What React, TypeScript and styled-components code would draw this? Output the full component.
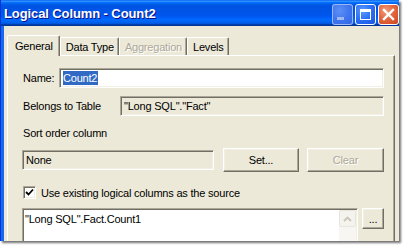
import styled, { createGlobalStyle } from "styled-components";

const GlobalStyle = createGlobalStyle`
  html, body {
    margin: 0;
    padding: 0;
    background: #ffffff;
  }
  body {
    font-family: "Liberation Sans", Arial, sans-serif;
    font-size: 11px;
    letter-spacing: -0.2px;
    color: #000;
  }
`;

const Stage = styled.div`
  width: 405px;
  height: 246px;
  overflow: hidden;
`;

const Window = styled.div`
  width: 399px;
  height: 241px;
  box-sizing: border-box;
  overflow: hidden;
  display: flex;
  flex-direction: column;
  background: #ece9d8;
  border-left: 1px solid #0831d9;
  box-shadow: 2px 2px 2px rgba(0, 0, 0, 0.55);
`;

const TitleBar = styled.div`
  height: 26px;
  flex: none;
  display: flex;
  align-items: flex-start;
  padding-left: 3px;
  background: linear-gradient(
    180deg,
    #0058ee 0%,
    #3593ff 4%,
    #288eff 6%,
    #127dff 8%,
    #036ffc 10%,
    #0262ee 14%,
    #0057e5 20%,
    #0054e3 24%,
    #0055eb 56%,
    #005bf5 66%,
    #026afe 76%,
    #0062ef 86%,
    #0052d6 92%,
    #0040ab 94%,
    #003092 100%
  );
`;

const TitleText = styled.div`
  padding-top: 6px;
  font-size: 13px;
  font-weight: bold;
  color: #fff;
  letter-spacing: -0.1px;
  text-shadow: 1px 1px #0f1089;
`;

const TitleButtons = styled.div`
  margin-left: auto;
  padding-top: 4px;
  display: flex;
  gap: 2px;
`;

const CaptionButton = styled.div<{ $kind: "min" | "max" | "close" }>`
  width: 21px;
  height: 21px;
  box-sizing: border-box;
  border-radius: 3px;
  display: flex;
  align-items: center;
  justify-content: center;
  border: 1px solid
    ${(p) => (p.$kind === "min" ? "rgba(190, 205, 245, 0.75)" : "#ffffff")};
  background: ${(p) =>
    p.$kind === "close"
      ? "radial-gradient(circle at 35% 30%, #f29b7b 0%, #e4683f 45%, #cc4520 100%)"
      : p.$kind === "max"
      ? "radial-gradient(circle at 35% 30%, #5b9cff 0%, #2c6ff5 50%, #1a55e0 100%)"
      : "radial-gradient(circle at 35% 30%, #5d8ff5 0%, #3e75ee 55%, #3366e3 100%)"};
`;

const Body = styled.div`
  flex: 1;
  display: flex;
  flex-direction: column;
  border-left: 3px solid #166aee;
  padding: 9px 4px 0 3px;
  min-height: 0;
`;

const TabStrip = styled.div`
  height: 20px;
  display: flex;
  align-items: flex-end;
  position: relative;
  z-index: 1;
`;

const Tab = styled.div<{ $active?: boolean; $disabled?: boolean }>`
  box-sizing: border-box;
  height: ${(p) => (p.$active ? "21px" : "18px")};
  margin-bottom: ${(p) => (p.$active ? "-1px" : "0")};
  padding: ${(p) => (p.$active ? "3px 6px 0 7px" : "2px 4px 0 5px")};
  background: #ece9d8;
  border-top: 1px solid #ffffff;
  border-left: 1px solid #ffffff;
  border-right: 1px solid #716f64;
  border-radius: 2px 2px 0 0;
  box-shadow: inset -1px 0 #aca899;
  line-height: 14px;
  white-space: nowrap;
  color: ${(p) => (p.$disabled ? "#aca899" : "#000")};
  text-shadow: ${(p) => (p.$disabled ? "1px 1px #ffffff" : "none")};
`;

const Panel = styled.div`
  flex: 1;
  display: flex;
  flex-direction: column;
  background: #ece9d8;
  border-top: 1px solid #ffffff;
  border-left: 1px solid #ffffff;
  border-right: 1px solid #716f64;
  box-shadow: inset -1px 0 #aca899;
  padding: 12px 10px 0 14px;
`;

const Row = styled.div<{ $height: number; $gap?: number }>`
  display: flex;
  align-items: center;
  height: ${(p) => p.$height}px;
  margin-top: ${(p) => p.$gap ?? 0}px;
`;

const Label = styled.div<{ $width?: number }>`
  flex: none;
  width: ${(p) => (p.$width ? `${p.$width}px` : "auto")};
  padding-left: 1px;
  white-space: nowrap;
`;

const Field = styled.div<{ $readOnly?: boolean }>`
  flex: 1;
  align-self: center;
  height: 20px;
  box-sizing: border-box;
  display: flex;
  align-items: center;
  padding-left: 3px;
  background: ${(p) => (p.$readOnly ? "#ece9d8" : "#ffffff")};
  border: 1px solid;
  border-color: #aca899 #ffffff #ffffff #aca899;
  box-shadow: inset 1px 1px #716f64, inset -1px -1px #f1efe2;
  white-space: nowrap;
  overflow: hidden;
`;

const Selected = styled.span`
  background: #316ac5;
  color: #ffffff;
  line-height: 14px;
  padding: 0 1px 0 0;
`;

const Button = styled.div<{ $width: number; $height?: number; $gap?: number; $disabled?: boolean }>`
  flex: none;
  width: ${(p) => p.$width}px;
  height: ${(p) => p.$height ?? 24}px;
  margin-left: ${(p) => p.$gap ?? 0}px;
  box-sizing: border-box;
  display: flex;
  align-items: center;
  justify-content: center;
  background: #ece9d8;
  border: 1px solid;
  border-color: #ffffff #716f64 #716f64 #ffffff;
  box-shadow: inset -1px -1px #aca899, inset 1px 1px #f1efe2;
  color: ${(p) => (p.$disabled ? "#aca899" : "#000")};
  text-shadow: ${(p) => (p.$disabled ? "1px 1px #ffffff" : "none")};
`;

const CheckBox = styled.div`
  width: 13px;
  height: 13px;
  box-sizing: border-box;
  flex: none;
  margin-left: 1px;
  background: #ffffff;
  border: 1px solid;
  border-color: #aca899 #ffffff #ffffff #aca899;
  box-shadow: inset 1px 1px #716f64, inset -1px -1px #f1efe2;
  display: flex;
  align-items: center;
  justify-content: center;
`;

const CheckLabel = styled.div`
  margin-left: 5px;
  white-space: nowrap;
`;

const SourceRow = styled.div`
  display: flex;
  align-items: flex-start;
  margin-top: 9px;
`;

const TextArea = styled.div`
  flex: 1;
  height: 60px;
  box-sizing: border-box;
  display: flex;
  background: #ffffff;
  border: 1px solid;
  border-color: #aca899 #ffffff #ffffff #aca899;
  box-shadow: inset 1px 1px #716f64, inset -1px -1px #f1efe2;
  padding: 1px 1px 1px 2px;
`;

const TextContent = styled.div`
  flex: 1;
  padding-top: 3px;
  white-space: nowrap;
`;

const ScrollBar = styled.div`
  width: 17px;
  flex: none;
  background: #f7f6f2;
`;

const ScrollArrow = styled.div`
  width: 17px;
  height: 17px;
  box-sizing: border-box;
  border: 1px solid #e8e6dc;
  border-radius: 2px;
  background: #f4f3ee;
  display: flex;
  align-items: center;
  justify-content: center;
`;

export default function App() {
  return (
    <>
      <GlobalStyle />
      <Stage>
        <Window>
          <TitleBar>
            <TitleText>Logical Column - Count2</TitleText>
            <TitleButtons>
              <CaptionButton $kind="min">
                <svg width="19" height="19" viewBox="0 0 19 19">
                  <rect x="4" y="12" width="7" height="3" fill="#9fb8ee" />
                </svg>
              </CaptionButton>
              <CaptionButton $kind="max">
                <svg width="19" height="19" viewBox="0 0 19 19">
                  <rect x="4.5" y="4.5" width="10" height="10" fill="none" stroke="#fff" strokeWidth="1" />
                  <rect x="4" y="4" width="11" height="3" fill="#fff" />
                </svg>
              </CaptionButton>
              <CaptionButton $kind="close">
                <svg width="19" height="19" viewBox="0 0 19 19">
                  <path d="M5 5 L14 14 M14 5 L5 14" stroke="#fff" strokeWidth="2.4" strokeLinecap="square" />
                </svg>
              </CaptionButton>
            </TitleButtons>
          </TitleBar>
          <Body>
            <TabStrip>
              <Tab $active>General</Tab>
              <Tab>Data Type</Tab>
              <Tab $disabled>Aggregation</Tab>
              <Tab>Levels</Tab>
            </TabStrip>
            <Panel>
              <Row $height={20}>
                <Label $width={36}>Name:</Label>
                <Field>
                  <Selected>Count2</Selected>
                </Field>
              </Row>
              <Row $height={20} $gap={8}>
                <Label $width={97}>Belongs to Table</Label>
                <Field $readOnly>"Long SQL"."Fact"</Field>
              </Row>
              <Row $height={14} $gap={10}>
                <Label>Sort order column</Label>
              </Row>
              <Row $height={24} $gap={8}>
                <Field $readOnly>None</Field>
                <Button $width={76} $gap={9}>Set...</Button>
                <Button $width={77} $gap={8} $disabled>
                  Clear
                </Button>
              </Row>
              <Row $height={13} $gap={14}>
                <CheckBox>
                  <svg width="9" height="9" viewBox="0 0 9 9">
                    <path d="M1 4 L3.5 6.5 L8 1.5" fill="none" stroke="#000" strokeWidth="1.8" />
                  </svg>
                </CheckBox>
                <CheckLabel>Use existing logical columns as the source</CheckLabel>
              </Row>
              <SourceRow>
                <TextArea>
                  <TextContent>"Long SQL".Fact.Count1</TextContent>
                  <ScrollBar>
                    <ScrollArrow>
                      <svg width="9" height="6" viewBox="0 0 9 6">
                        <path d="M1 5 L4.5 1.5 L8 5" fill="none" stroke="#c8c6bb" strokeWidth="1.8" />
                      </svg>
                    </ScrollArrow>
                  </ScrollBar>
                </TextArea>
                <Button $width={22} $height={21} $gap={4}>
                  ...
                </Button>
              </SourceRow>
            </Panel>
          </Body>
        </Window>
      </Stage>
    </>
  );
}
